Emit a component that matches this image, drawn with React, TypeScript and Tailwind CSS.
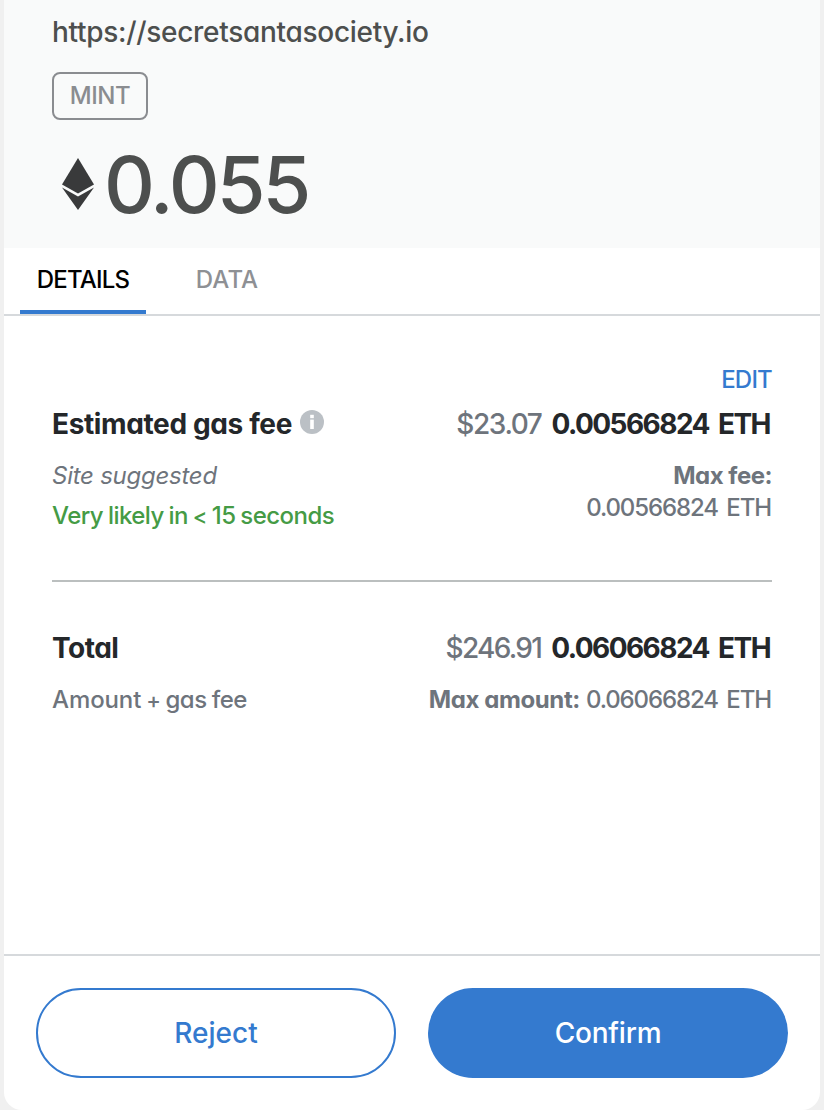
import { useState } from 'react';
import clsx from 'clsx';

const EthIcon = () => (
  <svg className="w-8 h-[52px] shrink-0" viewBox="0 0 32 52" fill="#393a3b">
    <path d="M16 0 L32 26.4 L16 35.6 L0 26.4 Z" />
    <path d="M0 29.4 L16 38.6 L32 29.4 L16 52 Z" />
  </svg>
);

const InfoIcon = () => (
  <svg className="w-6 h-6 mb-1 shrink-0" viewBox="0 0 24 24">
    <circle cx="12" cy="12" r="12" fill="#bbc0c5" />
    <rect x="10.2" y="4.8" width="3.6" height="3.4" fill="#fff" />
    <rect x="10.2" y="9.6" width="3.6" height="9.4" fill="#fff" />
  </svg>
);

const tabs = [
  { name: 'DETAILS', width: 'w-[126px]', text: 'tracking-[-0.8px]' },
  { name: 'DATA', width: 'w-[94px]', text: 'tracking-[0.1px]' },
];

export default function App() {
  const [activeTab, setActiveTab] = useState('DETAILS');

  return (
    <div className="h-[1110px] bg-[#f0f0f0] px-1 font-['Inter',sans-serif] font-[450] [font-feature-settings:'cv11'] overflow-hidden whitespace-nowrap">
      <div className="h-full flex flex-col bg-white rounded-b-[18px] overflow-hidden">
        <div className="h-[248px] shrink-0 bg-[#f9fafa] px-12 pt-4 text-[#4d4f4e]">
          <div className="h-8 leading-8 text-[28px] tracking-[-0.3px]">https://secretsantasociety.io</div>
          <div className="mt-6 w-24 h-12 flex items-center justify-center border-2 border-[#8a8c90] rounded-lg text-2xl text-[#8a8c90]">
            <span className="tracking-[-0.5px]">MINT</span>
          </div>
          <div className="mt-5 h-[88px] flex items-center pl-2.5">
            <EthIcon />
            <span className="ml-2.5 text-[79px] leading-[88px] tracking-[-3px]">0.055</span>
          </div>
        </div>

        <div className="h-[68px] shrink-0 flex gap-[34px] pl-4 border-b-2 border-[#d6d9dc]">
          {tabs.map((tab) => (
            <button
              key={tab.name}
              onClick={() => setActiveTab(tab.name)}
              className={clsx(
                'h-full pt-0.5 border-b-4 text-2xl cursor-pointer',
                tab.width,
                activeTab === tab.name ? 'border-[#347acf] text-black' : 'border-transparent text-[#8e9094]'
              )}
            >
              <span className={tab.text}>{tab.name}</span>
            </button>
          ))}
        </div>

        <div className="flex-1 px-12 pt-12 text-2xl text-[#6e747c]">
          <div className="h-8 leading-8 text-right text-[#347acf]">
            <span className="tracking-[-0.8px]">EDIT</span>
          </div>
          <div className="mt-2 h-10 flex items-center justify-between text-[28px] leading-10">
            <div className="flex items-center gap-2">
              <span className="font-bold text-[#24272a] tracking-[-0.37px]">Estimated gas fee</span>
              <InfoIcon />
            </div>
            <div className="flex items-center gap-2.5">
              <span className="tracking-[-1.4px]">$23.07</span>
              <span className="pr-0.5 font-bold text-[#24272a] tracking-[-1.55px] [word-spacing:4px]">0.00566824 ETH</span>
            </div>
          </div>
          <div className="mt-4 flex justify-between leading-8">
            <div>
              <div className="italic tracking-[-0.25px]">Site suggested</div>
              <div className="mt-2 text-[#459b45] tracking-[-0.55px] [word-spacing:-1px]">
                Very likely in <span className="text-[22px] leading-none">&lt;</span> 15 seconds
              </div>
            </div>
            <div className="text-right">
              <div className="font-bold tracking-[-0.5px]">Max fee:</div>
              <div className="pr-px tracking-[-1.1px] [word-spacing:3px]">0.00566824 ETH</div>
            </div>
          </div>

          <div className="mt-12 border-t-2 border-[#bbbfbf]" />

          <div className="mt-[46px] h-10 flex items-center justify-between text-[28px] leading-10">
            <span className="font-bold text-[#24272a] tracking-[-0.5px]">Total</span>
            <div className="flex items-center gap-2.5">
              <span className="tracking-[-1.7px]">$246.91</span>
              <span className="pr-0.5 font-bold text-[#24272a] tracking-[-1.55px] [word-spacing:4px]">0.06066824 ETH</span>
            </div>
          </div>
          <div className="mt-4 flex justify-between leading-8">
            <div className="tracking-[-0.45px] [word-spacing:-1px]">
              <span className="tracking-[-0.1px]">Amount</span> <span className="text-[22px] leading-none">+</span> gas fee
            </div>
            <div className="flex gap-1.5">
              <span className="font-bold tracking-[-0.4px]">Max amount:</span>
              <span className="pr-px tracking-[-1.1px] [word-spacing:3px]">0.06066824 ETH</span>
            </div>
          </div>
        </div>

        <div className="h-[156px] shrink-0 flex gap-8 px-8 pt-8 border-t-2 border-[#d6d9dc] text-[28px]">
          <button className="w-[360px] h-[90px] rounded-full border-2 border-[#347acf] text-[#347acf] cursor-pointer">
            <span>Reject</span>
          </button>
          <button className="w-[360px] h-[90px] rounded-full bg-[#347acf] text-white cursor-pointer">
            <span className="tracking-[-0.2px]">Confirm</span>
          </button>
        </div>
      </div>
    </div>
  );
}
